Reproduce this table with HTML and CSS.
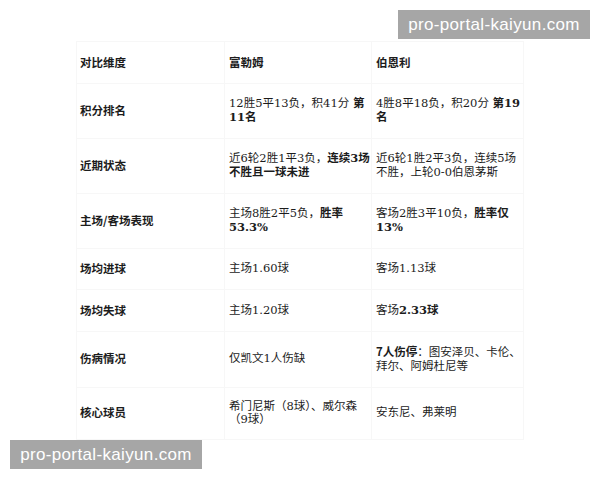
FILE: index.html
```html
<!DOCTYPE html>
<html lang="zh">
<head>
<meta charset="utf-8">
<link rel="stylesheet" href="styles.css">
</head>
<body>
<div class="page">
  <table class="cmp">
    <colgroup><col class="c1"><col class="c2"><col class="c3"></colgroup>
    <tr class="head"><td>对比维度</td><td>富勒姆</td><td>伯恩利</td></tr>
    <tr><td class="lab">积分排名</td><td>12胜5平13负，积41分 <b>第</b><br><b>11名</b></td><td>4胜8平18负，积20分 <b>第19</b><br><b>名</b></td></tr>
    <tr><td class="lab">近期状态</td><td>近6轮2胜1平3负，<b>连续3场</b><br><b>不胜且一球未进</b></td><td>近6轮1胜2平3负，连续5场<br>不胜，上轮0-0伯恩茅斯</td></tr>
    <tr><td class="lab">主场/客场表现</td><td>主场8胜2平5负，<b>胜率</b><br><b>53.3%</b></td><td>客场2胜3平10负，<b>胜率仅</b><br><b>13%</b></td></tr>
    <tr><td class="lab">场均进球</td><td>主场1.60球</td><td>客场1.13球</td></tr>
    <tr><td class="lab">场均失球</td><td>主场1.20球</td><td>客场<b>2.33球</b></td></tr>
    <tr><td class="lab">伤病情况</td><td>仅凯文1人伤缺</td><td><b class="sans">7人伤停</b>：图安泽贝、卡伦、<br>拜尔、阿姆杜尼等</td></tr>
    <tr class="last"><td class="lab">核心球员</td><td>希门尼斯（8球）、威尔森<br>（9球）</td><td>安东尼、弗莱明</td></tr>
  </table>
  <div class="wm wm-top">pro-portal-kaiyun.com</div>
  <div class="wm wm-bottom">pro-portal-kaiyun.com</div>
</div>
</body>
</html>
```

FILE: styles.css
```css
html, body {
  margin: 0;
  padding: 0;
  background: #ffffff;
}
.page {
  position: relative;
  width: 600px;
  height: 480px;
  overflow: hidden;
  padding-top: 41px;
  box-sizing: border-box;
}
.cmp {
  margin-left: 76px;
  width: 447px;
  border-collapse: collapse;
  table-layout: fixed;
  font-family: "DejaVu Serif", "Noto Sans CJK SC", serif;
  font-size: 11.5px;
  line-height: 13.5px;
  color: #1c1c1c;
}
.c1 { width: 148px; }
.c2 { width: 147px; }
.c3 { width: 152px; }
.cmp td {
  padding: 13.5px 3px 13.5px 4px;
  vertical-align: middle;
  border: 1px solid #f7f7f7;
  white-space: nowrap;
}
.cmp .last td {
  padding-top: 12px;
  padding-bottom: 12px;
}
.cmp td:first-child { padding-left: 3px; }
.cmp b { font-weight: 700; }
.head td, .lab {
  font-family: "Noto Sans CJK SC", sans-serif;
  font-weight: 700;
}
.sans { font-family: "Noto Sans CJK SC", sans-serif; }
.wm {
  position: absolute;
  background: #a6a6a6;
  color: #ffffff;
  font-family: "Liberation Sans", "DejaVu Sans", sans-serif;
  font-size: 17px;
  letter-spacing: 0.35px;
  height: 29px;
  width: 192px;
  line-height: 29px;
  text-align: center;
}
.wm-top { left: 398px; top: 10px; }
.wm-bottom { left: 10px; top: 440px; }
```
